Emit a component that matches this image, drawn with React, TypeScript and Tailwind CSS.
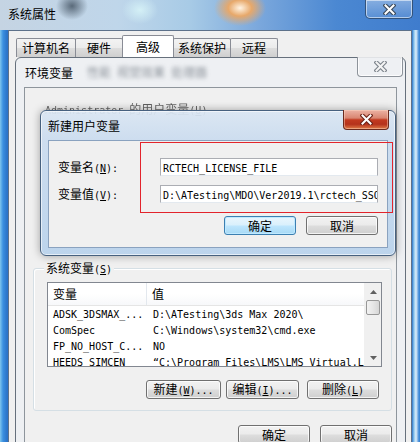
import React from "react";

const CJK_RE = /([\u2E80-\u9FFF\u3000-\u303F\uFF00-\uFFEF]+)/;

function Ascii({ s }: { s: string }) {
  const parts = s.split(/(&.)/).filter((p) => p.length > 0);
  return (
    <span className="font-['DejaVu_Sans_Mono',monospace] text-[10px]">
      {parts.map((p, i) =>
        p.length === 2 && p[0] === "&" ? (
          <span key={i} className="underline underline-offset-1">
            {p[1]}
          </span>
        ) : (
          <React.Fragment key={i}>{p}</React.Fragment>
        )
      )}
    </span>
  );
}

function T({ t, className = "" }: { t: string; className?: string }) {
  const segs = t.split(CJK_RE).filter((s) => s.length > 0);
  return (
    <span className={`whitespace-pre ${className}`}>
      {segs.map((s, i) =>
        CJK_RE.test(s) ? (
          <span key={i} className="font-['Noto_Sans_CJK_SC',sans-serif] text-[12px]">
            {s}
          </span>
        ) : (
          <Ascii key={i} s={s} />
        )
      )}
    </span>
  );
}

function XGlyph({ fill, stroke }: { fill: string; stroke: string }) {
  return (
    <svg width="13" height="11" viewBox="0 0 13 11">
      <path d="M2.5 1.5 L10.5 9.5 M10.5 1.5 L2.5 9.5" stroke={stroke} strokeWidth="4.2" strokeLinecap="square" fill="none" />
      <path d="M2.5 1.5 L10.5 9.5 M10.5 1.5 L2.5 9.5" stroke={fill} strokeWidth="2" strokeLinecap="square" fill="none" />
    </svg>
  );
}

function Btn({ t, className = "", def = false }: { t: string; className?: string; def?: boolean }) {
  return (
    <div
      className={`h-[19px] flex items-center justify-center rounded-[3px] border ${
        def
          ? "border-[#3c7fb1] bg-[linear-gradient(180deg,#eaf6fd_0%,#d9f0fc_48%,#bee6fd_52%,#a7d9f5_100%)] shadow-[inset_0_0_0_1px_#bfe9ff]"
          : "border-[#707070] bg-[linear-gradient(180deg,#f2f2f2_0%,#ebebeb_48%,#dddddd_52%,#cfcfcf_100%)] shadow-[inset_0_0_0_1px_rgba(255,255,255,0.75)]"
      } ${className}`}
    >
      <T t={t} />
    </div>
  );
}

function Tab({ t, className = "", sel = false }: { t: string; className?: string; sel?: boolean }) {
  return (
    <div
      className={`-ml-px flex items-center justify-center border border-b-0 border-[#898c95] rounded-t-[2px] ${
        sel
          ? "h-[22px] bg-white z-10"
          : "h-[19px] bg-[linear-gradient(180deg,#f3f3f3_0%,#ebebeb_50%,#dddddd_51%,#cfcfcf_100%)]"
      } ${className}`}
    >
      <T t={t} />
    </div>
  );
}

const rows: [string, string][] = [
  ["ADSK_3DSMAX_...", "D:\\ATesting\\3ds Max 2020\\"],
  ["ComSpec", "C:\\Windows\\system32\\cmd.exe"],
  ["FP_NO_HOST_C...", "NO"],
  ["HEEDS_SIMCEN", "\u201CC:\\Program Files\\LMS\\LMS Virtual.Lab"],
];

export default function App() {
  return (
    <div className="relative w-[420px] h-[442px] overflow-hidden bg-[linear-gradient(90deg,#7fc6ee_0px,#3b90e0_3px,#2b74c9_7px,#2b74c9_412px,#8ec8ee_414px,#dfeffa_416px,#3a86d6_419px)] text-black leading-none font-['Noto_Sans_CJK_SC',sans-serif] text-[12px]">
      {/* title bar of outer window */}
      <div className="absolute left-0 top-0 w-[420px] h-[30px] bg-[radial-gradient(ellipse_16px_14px_at_72px_6px,rgba(55,70,85,0.75),transparent),radial-gradient(ellipse_26px_18px_at_240px_8px,#fff4e4_0%,#e7a86a_45%,transparent_100%),radial-gradient(ellipse_18px_14px_at_140px_10px,#d4f0f6_0%,transparent_100%),linear-gradient(90deg,#c5d4e3_0%,#bfd6ea_28%,#a8cbe6_45%,#7aa7dc_62%,#4b88d2_80%,#3f7ccd_100%)]">
        <div className="h-[28px] flex items-center pl-[8px]">
          <T t="系统属性" />
        </div>
        <div className="absolute left-[365px] top-0 w-[48px] h-[19px] flex items-center justify-center rounded-b-[5px] border border-t-0 border-[#33527a] bg-[linear-gradient(180deg,rgba(255,255,255,0.35),rgba(255,255,255,0.1))] shadow-[inset_0_0_0_1px_rgba(255,255,255,0.55)]">
          <XGlyph fill="#ffffff" stroke="#3b4a5c" />
        </div>
      </div>

      {/* outer window content */}
      <div className="absolute left-[8px] top-[30px] w-[404px] h-[420px] bg-[#f0f0f0] border border-[#5d718a]">
        <div className="flex items-end h-[26px] pl-[8px]">
          <Tab t="计算机名" className="w-[60px]" />
          <Tab t="硬件" className="w-[48px]" />
          <Tab t="高级" className="w-[52px]" sel />
          <Tab t="系统保护" className="w-[58px]" />
          <Tab t="远程" className="w-[48px]" />
        </div>
      </div>

      {/* 环境变量 window */}
      <div className="absolute left-[15px] top-[57px] w-[391px] h-[400px] rounded-t-[6px] border border-[#66707c] bg-[#eef0f3] flex flex-col">
        <div className="relative h-[29px] flex items-center pl-[9px] shrink-0">
          <T t="环境变量" />
          <span className="ml-[14px] blur-[2px] text-[#5d6670] opacity-70">
            <T t="性能 视觉效果 处理器" />
          </span>
          <div className="absolute left-[341px] -top-px w-[46px] h-[20px] flex items-center justify-center rounded-b-[4px] border border-t-0 border-[#8d939a] shadow-[inset_0_0_0_1px_rgba(255,255,255,0.8)]">
            <XGlyph fill="#f4f4f4" stroke="#7d848c" />
          </div>
        </div>
        <div className="mx-[8px] flex-1 border border-[#8e959c] bg-[#f0f0f0] flex flex-col">
          <div className="pl-[20px] pt-[15px] h-[180px] shrink-0">
            <span className="opacity-60 blur-[0.6px]">
              <T t="Administrator 的用户变量(&U)" />
            </span>
          </div>
          {/* system group */}
          <div className="relative ml-[8px] w-[359px] h-[143px] border border-[#d5dfe5] rounded-[3px] shadow-[inset_1px_1px_0_#ffffff] pl-[13px] pt-[13px] flex flex-col">
            <div className="absolute left-[10px] -top-[7px] px-[2px] bg-[#f0f0f0]">
              <T t="系统变量(&S)" />
            </div>
            <div className="w-[335px] h-[85px] border border-[#828790] bg-white flex overflow-hidden">
              <div className="flex-1 min-w-0 flex flex-col">
                <div className="h-[23px] shrink-0 flex border-b border-[#e5e5e5] bg-[linear-gradient(180deg,#ffffff_0%,#ffffff_50%,#f7f8fa_100%)]">
                  <div className="w-[99px] shrink-0 flex items-center pl-[5px] border-r border-[#e3e8ee]">
                    <T t="变量" />
                  </div>
                  <div className="flex items-center pl-[5px]">
                    <T t="值" />
                  </div>
                </div>
                {rows.map(([a, b]) => (
                  <div key={a} className="h-[16px] shrink-0 flex items-center leading-[16px]">
                    <div className="w-[99px] shrink-0 pl-[5px] whitespace-nowrap">
                      <T t={a} />
                    </div>
                    <div className="pl-[6px] whitespace-nowrap">
                      <T t={b} />
                    </div>
                  </div>
                ))}
              </div>
              <div className="relative z-10 w-[17px] shrink-0 flex flex-col bg-[#f0f0f0] border-l border-[#f0f0f0]">
                <div className="h-[17px] flex items-center justify-center">
                  <svg width="7" height="4" viewBox="0 0 7 4">
                    <path d="M0 4 L3.5 0 L7 4 Z" fill="#606060" />
                  </svg>
                </div>
                <div className="h-[15px] mx-[1px] rounded-[2px] border border-[#979797] bg-[linear-gradient(90deg,#f2f2f2,#e6e6e6_50%,#d6d6d6)]" />
                <div className="flex-1" />
                <div className="h-[17px] flex items-center justify-center">
                  <svg width="7" height="4" viewBox="0 0 7 4">
                    <path d="M0 0 L7 0 L3.5 4 Z" fill="#606060" />
                  </svg>
                </div>
              </div>
            </div>
            <div className="flex mt-[13px] pl-[99px]">
              <Btn t="新建(&W)..." className="w-[75px]" />
              <Btn t="编辑(&I)..." className="w-[73px] ml-[5px]" />
              <Btn t="删除(&L)" className="w-[72px] ml-[8px]" />
            </div>
          </div>
          <div className="flex pl-[213px] mt-[14px]">
            <Btn t="确定" className="w-[72px]" />
            <Btn t="取消" className="w-[72px] ml-[10px]" />
          </div>
        </div>
      </div>

      {/* 新建用户变量 dialog */}
      <div className="absolute left-[40px] top-[110px] w-[356px] h-[146px] rounded-[6px] border border-[#47617f] bg-[linear-gradient(180deg,rgba(218,230,243,0.93)_0%,rgba(203,220,239,0.93)_28px,rgba(186,211,236,0.96)_100%)] shadow-[0_0_9px_rgba(0,0,0,0.35),inset_0_0_0_1px_rgba(255,255,255,0.6)] flex flex-col">
        <div className="relative h-[29px] shrink-0 flex items-center pl-[7px]">
          <T t="新建用户变量" />
          <div className="absolute left-[302px] -top-px w-[46px] h-[20px] flex items-center justify-center rounded-b-[4px] border border-t-0 border-[#6b2a1e] bg-[linear-gradient(180deg,#ecb2a4_0%,#d98672_42%,#c23a20_52%,#b5321c_75%,#df7b47_100%)] shadow-[inset_0_0_0_1px_rgba(255,220,200,0.45)]">
            <XGlyph fill="#ffffff" stroke="#6e2418" />
          </div>
        </div>
        <div className="mx-[7px] h-[108px] border border-[#8aa2bf] bg-[#f0f0f0] flex flex-col pt-[17px] pl-[9px]">
          <div className="flex items-center h-[18px]">
            <div className="w-[102px]">
              <T t="变量名(&N):" />
            </div>
            <div className="w-[218px] h-[18px] border border-[#abadb3] border-b-[#e3e9ef] bg-white pl-[2px] flex items-center overflow-hidden">
              <T t="RCTECH_LICENSE_FILE" />
            </div>
          </div>
          <div className="flex items-center h-[18px] mt-[9px]">
            <div className="w-[102px]">
              <T t="变量值(&V):" />
            </div>
            <div className="w-[218px] h-[18px] border border-[#abadb3] border-b-[#e3e9ef] bg-white pl-[2px] flex items-center overflow-hidden whitespace-nowrap">
              <T t="D:\ATesting\MDO\Ver2019.1\rctech_SSO_license" />
            </div>
          </div>
          <div className="flex mt-[13px] pl-[166px]">
            <Btn t="确定" className="w-[72px]" def />
            <Btn t="取消" className="w-[72px] ml-[10px]" />
          </div>
        </div>
      </div>

      {/* red highlight */}
      <div className="absolute left-[140px] top-[142px] w-[253px] h-[71px] border border-[#e2242c]" />
    </div>
  );
}
